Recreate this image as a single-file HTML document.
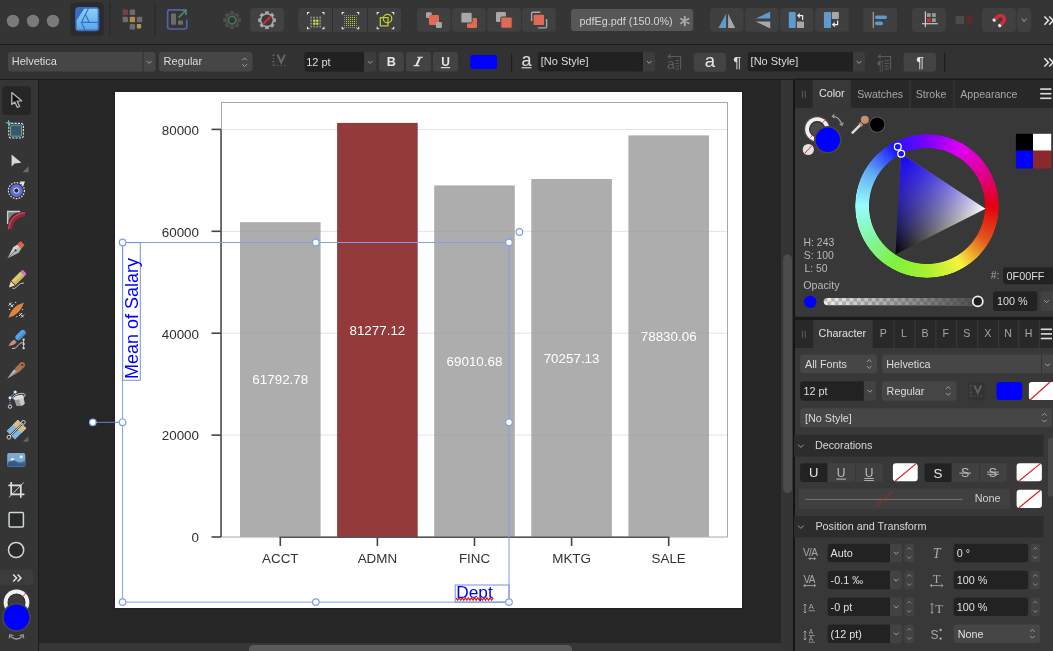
<!DOCTYPE html>
<html><head><meta charset="utf-8">
<style>
*{box-sizing:border-box;margin:0;padding:0}
html,body{width:1053px;height:651px;overflow:hidden;background:#282828;font-family:"Liberation Sans",sans-serif}
.a{position:absolute}
#root{position:relative;width:1053px;height:651px;overflow:hidden}
</style></head><body><div id="root">
<div class="a" style="left:0;top:0;width:1053px;height:44px;background:#353535"></div>
<div class="a" style="left:0;top:44px;width:1053px;height:1px;background:#1c1c1c"></div>
<div class="a" style="left:0;top:45px;width:1053px;height:34px;background:#323232"></div>
<div class="a" style="left:0;top:79px;width:1053px;height:1px;background:#1c1c1c"></div>
<div class="a" style="left:0;top:80px;width:38px;height:571px;background:#353535"></div>
<div class="a" style="left:38px;top:80px;width:1px;height:571px;background:#1c1c1c"></div>
<div class="a" style="left:39px;top:80px;width:755px;height:571px;background:#262626"></div>
<div class="a" style="left:39px;top:642.8px;width:742px;height:9px;background:#363636"></div>
<div class="a" style="left:249.4px;top:645.2px;width:322.4px;height:10px;border-radius:4.5px;background:#5a5a5a"></div>
<div class="a" style="left:115px;top:92px;width:627px;height:516px;background:#ffffff;box-shadow:0 0 1.5px #151515"></div>
<svg class="a" style="left:0;top:0" width="1053" height="651" font-family="Liberation Sans, sans-serif"><rect x="221.5" y="102.5" width="506" height="434.5" fill="none" stroke="#a8a8a8" stroke-width="1"/>
<line x1="222" y1="129.4" x2="727" y2="129.4" stroke="#ecebe3" stroke-width="1"/>
<line x1="222" y1="231.3" x2="727" y2="231.3" stroke="#ecebe3" stroke-width="1"/>
<line x1="222" y1="333.2" x2="727" y2="333.2" stroke="#ecebe3" stroke-width="1"/>
<line x1="222" y1="435.1" x2="727" y2="435.1" stroke="#ecebe3" stroke-width="1"/>
<rect x="240.0" y="222.2" width="80.6" height="314.8" fill="#adadad"/>
<text x="280.3" y="384.4" text-anchor="middle" fill="#ffffff" font-size="13.4">61792.78</text>
<line x1="280.3" y1="537.0" x2="280.3" y2="546" stroke="#444" stroke-width="1.6"/>
<text x="280.3" y="562.8" text-anchor="middle" fill="#333333" font-size="13.4">ACCT</text>
<rect x="337.1" y="122.9" width="80.6" height="414.1" fill="#953a3b"/>
<text x="377.4" y="334.7" text-anchor="middle" fill="#ffffff" font-size="13.4">81277.12</text>
<line x1="377.4" y1="537.0" x2="377.4" y2="546" stroke="#444" stroke-width="1.6"/>
<text x="377.4" y="562.8" text-anchor="middle" fill="#333333" font-size="13.4">ADMN</text>
<rect x="434.2" y="185.4" width="80.6" height="351.6" fill="#adadad"/>
<text x="474.5" y="366.0" text-anchor="middle" fill="#ffffff" font-size="13.4">69010.68</text>
<line x1="474.5" y1="537.0" x2="474.5" y2="546" stroke="#444" stroke-width="1.6"/>
<text x="474.5" y="562.8" text-anchor="middle" fill="#333333" font-size="13.4">FINC</text>
<rect x="531.3" y="179.0" width="80.6" height="358.0" fill="#adadad"/>
<text x="571.6" y="362.8" text-anchor="middle" fill="#ffffff" font-size="13.4">70257.13</text>
<line x1="571.6" y1="537.0" x2="571.6" y2="546" stroke="#444" stroke-width="1.6"/>
<text x="571.6" y="562.8" text-anchor="middle" fill="#333333" font-size="13.4">MKTG</text>
<rect x="628.4" y="135.4" width="80.6" height="401.6" fill="#adadad"/>
<text x="668.7" y="341.0" text-anchor="middle" fill="#ffffff" font-size="13.4">78830.06</text>
<line x1="668.7" y1="537.0" x2="668.7" y2="546" stroke="#444" stroke-width="1.6"/>
<text x="668.7" y="562.8" text-anchor="middle" fill="#333333" font-size="13.4">SALE</text>
<line x1="222" y1="435.1" x2="727" y2="435.1" stroke="#f8f7f3" stroke-width="1" style="mix-blend-mode:multiply"/>
<line x1="222" y1="333.2" x2="727" y2="333.2" stroke="#f8f7f3" stroke-width="1" style="mix-blend-mode:multiply"/>
<line x1="222" y1="231.3" x2="727" y2="231.3" stroke="#f8f7f3" stroke-width="1" style="mix-blend-mode:multiply"/>
<line x1="222" y1="129.4" x2="727" y2="129.4" stroke="#f8f7f3" stroke-width="1" style="mix-blend-mode:multiply"/>
<line x1="221" y1="129.6" x2="221" y2="537.0" stroke="#555" stroke-width="1.6"/>
<line x1="279.5" y1="537.2" x2="669.5" y2="537.2" stroke="#555" stroke-width="1.6"/>
<line x1="211.5" y1="537.0" x2="221" y2="537.0" stroke="#444" stroke-width="1.6"/>
<text x="199" y="542.3" text-anchor="end" fill="#2e2e2e" font-size="13.4">0</text>
<line x1="211.5" y1="435.1" x2="221" y2="435.1" stroke="#444" stroke-width="1.6"/>
<text x="199" y="440.4" text-anchor="end" fill="#2e2e2e" font-size="13.4">20000</text>
<line x1="211.5" y1="333.2" x2="221" y2="333.2" stroke="#444" stroke-width="1.6"/>
<text x="199" y="338.5" text-anchor="end" fill="#2e2e2e" font-size="13.4">40000</text>
<line x1="211.5" y1="231.3" x2="221" y2="231.3" stroke="#444" stroke-width="1.6"/>
<text x="199" y="236.6" text-anchor="end" fill="#2e2e2e" font-size="13.4">60000</text>
<line x1="211.5" y1="129.4" x2="221" y2="129.4" stroke="#444" stroke-width="1.6"/>
<text x="199" y="134.7" text-anchor="end" fill="#2e2e2e" font-size="13.4">80000</text></svg>
<svg class="a" style="left:0;top:0" width="1053" height="651" font-family="Liberation Sans, sans-serif"><rect x="122.6" y="242.5" width="386.4" height="359.6" fill="none" stroke="#7ea2e6" stroke-width="1"/>
<rect x="122.6" y="242.6" width="17.7" height="137.7" fill="none" stroke="#6f93e6" stroke-width="1"/>
<text transform="translate(138.2,379) rotate(-90)" fill="#0000ff" font-size="18">Mean of Salary</text>
<rect x="455.2" y="585" width="53.8" height="17.1" fill="none" stroke="#6f93e6" stroke-width="1"/>
<text x="456.2" y="597.5" fill="#0000ff" font-size="17.3">Dept</text>
<polyline points="456.0,597.9 457.6,600.1 459.1,597.9 460.7,600.1 462.2,597.9 463.8,600.1 465.3,597.9 466.9,600.1 468.4,597.9 470.0,600.1 471.5,597.9 473.1,600.1 474.6,597.9 476.2,600.1 477.7,597.9 479.3,600.1 480.8,597.9 482.4,600.1 483.9,597.9 485.5,600.1 487.0,597.9 488.6,600.1 490.1,597.9 491.7,600.1 493.2,597.9" fill="none" stroke="#e01a1a" stroke-width="1.2"/>
<line x1="92.8" y1="422.30" x2="122.6" y2="422.30" stroke="#5f86d0" stroke-width="1"/>
<circle cx="92.8" cy="422.30" r="3.3" fill="#ffffff" stroke="#7ea2e6" stroke-width="1.2"/>
<circle cx="122.60" cy="242.50" r="3.3" fill="#ffffff" stroke="#7ea2e6" stroke-width="1.2"/>
<circle cx="315.80" cy="242.50" r="3.3" fill="#ffffff" stroke="#7ea2e6" stroke-width="1.2"/>
<circle cx="509.00" cy="242.50" r="3.3" fill="#ffffff" stroke="#7ea2e6" stroke-width="1.2"/>
<circle cx="122.60" cy="422.30" r="3.3" fill="#ffffff" stroke="#7ea2e6" stroke-width="1.2"/>
<circle cx="509.00" cy="422.30" r="3.3" fill="#ffffff" stroke="#7ea2e6" stroke-width="1.2"/>
<circle cx="122.60" cy="602.10" r="3.3" fill="#ffffff" stroke="#7ea2e6" stroke-width="1.2"/>
<circle cx="315.80" cy="602.10" r="3.3" fill="#ffffff" stroke="#7ea2e6" stroke-width="1.2"/>
<circle cx="509.00" cy="602.10" r="3.3" fill="#ffffff" stroke="#7ea2e6" stroke-width="1.2"/>
<circle cx="519.40" cy="232.00" r="3.3" fill="#ffffff" stroke="#7ea2e6" stroke-width="1.2"/></svg>
<div class="a" style="left:794px;top:80px;width:259px;height:571px;background:#383838"></div>
<div class="a" style="left:792px;top:80px;width:2px;height:571px;background:#1c1c1c"></div>
<svg class="a" style="left:0;top:0" width="1053" height="44" font-family="Liberation Sans, sans-serif"><circle cx="13" cy="21" r="6.2" fill="#7a7a7a"/>
<circle cx="33" cy="21" r="6.2" fill="#7a7a7a"/>
<circle cx="53" cy="21" r="6.2" fill="#7a7a7a"/>
<rect x="70.5" y="2.5" width="33.3" height="33.2" rx="4" fill="#2b2b2b" />
<rect x="75.2" y="7" width="24.1" height="24.2" rx="3.5" fill="#3a6cc2" />
<defs><linearGradient id="ag" x1="0" y1="0" x2="0" y2="1"><stop offset="0" stop-color="#8ed0fa"/><stop offset="1" stop-color="#5aa6ea"/></linearGradient></defs>
<path d="M84.2,8.7 L96.8,8.7 Q97.6,8.7 97.6,9.5 L97.6,28.8 Q97.6,29.6 96.8,29.6 L77.5,29.6 Q76.7,29.6 76.7,28.8 L76.7,20.2 Z" fill="url(#ag)"/>
<path d="M88.4,8.6 L81.4,22.4 L84.9,29.7 M81.4,22.4 L97.7,22.4 M85.7,15 L89.3,22.4" fill="none" stroke="#3b6cc0" stroke-width="1.15"/>
<rect x="109.5" y="2.5" width="1" height="33" rx="0" fill="#262626" />
<rect x="154.5" y="2.5" width="1" height="33" rx="0" fill="#262626" />
<rect x="122.6" y="9.6" width="5.4" height="5.4" rx="1" fill="#7c3f48" />
<rect x="129.7" y="9.6" width="5.4" height="5.4" rx="1" fill="#6c6c6c" />
<rect x="122.6" y="16.8" width="5.4" height="5.4" rx="1" fill="#6c6c6c" />
<rect x="129.7" y="16.8" width="5.4" height="5.4" rx="1" fill="#b48a4e" />
<rect x="136.8" y="16.8" width="5.4" height="5.4" rx="1" fill="#6c6c6c" />
<rect x="129.7" y="24.0" width="5.4" height="5.4" rx="1" fill="#6c6c6c" />
<rect x="136.8" y="24.0" width="4.4" height="4.4" rx="1" fill="#aa9a4e" />
<path d="M181,9.8 L170,9.8 Q167.6,9.8 167.6,12.2 L167.6,26.6 Q167.6,29 170,29 L184.4,29 Q186.8,29 186.8,26.6 L186.8,19.5" fill="none" stroke="#5262aa" stroke-width="1.7"/>
<rect x="171" y="13.4" width="5" height="11.4" rx="0.8" fill="#6c6c6c" />
<rect x="178" y="20.4" width="5" height="4.4" rx="0.8" fill="#6c6c6c" />
<path d="M178.6,17.6 L185.6,10.6 M181.2,10.2 L186,10.2 L186,15" fill="none" stroke="#4a8670" stroke-width="1.7"/>
<path d="M238.83,18.27 L240.94,18.51 L240.94,21.89 L238.83,22.13 L238.57,22.88 L238.22,23.59 L239.55,25.26 L237.16,27.65 L235.49,26.32 L234.78,26.67 L234.03,26.93 L233.79,29.04 L230.41,29.04 L230.17,26.93 L229.42,26.67 L228.71,26.32 L227.04,27.65 L224.65,25.26 L225.98,23.59 L225.63,22.88 L225.37,22.13 L223.26,21.89 L223.26,18.51 L225.37,18.27 L225.63,17.52 L225.98,16.81 L224.65,15.14 L227.04,12.75 L228.71,14.08 L229.42,13.73 L230.17,13.47 L230.41,11.36 L233.79,11.36 L234.03,13.47 L234.78,13.73 L235.49,14.08 L237.16,12.75 L239.55,15.14 L238.22,16.81 L238.57,17.52Z" fill="#4e4e4e"/>
<circle cx="232.1" cy="20.2" r="5.6" fill="#333333"/>
<circle cx="232.1" cy="20.2" r="3.8" fill="none" stroke="#457250" stroke-width="1.9"/>
<rect x="250.1" y="8.1" width="33.9" height="23.7" rx="4" fill="#424242" />
<path d="M273.73,18.27 L275.84,18.51 L275.84,21.89 L273.73,22.13 L273.47,22.88 L273.12,23.59 L274.45,25.26 L272.06,27.65 L270.39,26.32 L269.68,26.67 L268.93,26.93 L268.69,29.04 L265.31,29.04 L265.07,26.93 L264.32,26.67 L263.61,26.32 L261.94,27.65 L259.55,25.26 L260.88,23.59 L260.53,22.88 L260.27,22.13 L258.16,21.89 L258.16,18.51 L260.27,18.27 L260.53,17.52 L260.88,16.81 L259.55,15.14 L261.94,12.75 L263.61,14.08 L264.32,13.73 L265.07,13.47 L265.31,11.36 L268.69,11.36 L268.93,13.47 L269.68,13.73 L270.39,14.08 L272.06,12.75 L274.45,15.14 L273.12,16.81 L273.47,17.52Z" fill="#a8a8a8"/>
<circle cx="267" cy="20.2" r="5.6" fill="#3a3a3a"/>
<line x1="264" y1="23.2" x2="270" y2="17.2" stroke="#d9283a" stroke-width="2.2" stroke-linecap="round"/>
<rect x="298.1" y="8.1" width="102.9" height="23.9" rx="4" fill="#404040" />
<rect x="332.2" y="8.1" width="0.8" height="23.9" rx="0" fill="#2c2c2c" />
<rect x="367.2" y="8.1" width="0.8" height="23.9" rx="0" fill="#2c2c2c" />
<path d="M307.5,14.5 L307.5,12.5 L309.5,12.5 M322.0,12.5 L324,12.5 L324,14.5 M307.5,26.8 L307.5,28.8 L309.5,28.8 M322.0,28.8 L324,28.8 L324,26.8" fill="none" stroke="#e8e8e8" stroke-width="1.1"/>
<rect x="310.2" y="16.6" width="1.9" height="1.9" rx="0" fill="#858585" />
<rect x="310.2" y="19.6" width="1.9" height="1.9" rx="0" fill="#858585" />
<rect x="310.2" y="22.6" width="1.9" height="1.9" rx="0" fill="#858585" />
<rect x="310.2" y="25.6" width="1.9" height="1.9" rx="0" fill="#858585" />
<rect x="313.2" y="16.6" width="1.9" height="1.9" rx="0" fill="#858585" />
<rect x="313.2" y="19.6" width="2.2" height="2.2" rx="0" fill="#d9ea2c" />
<rect x="313.2" y="22.6" width="2.2" height="2.2" rx="0" fill="#d9ea2c" />
<rect x="313.2" y="25.6" width="1.9" height="1.9" rx="0" fill="#858585" />
<rect x="316.2" y="16.6" width="1.9" height="1.9" rx="0" fill="#858585" />
<rect x="316.2" y="19.6" width="2.2" height="2.2" rx="0" fill="#d9ea2c" />
<rect x="316.2" y="22.6" width="2.2" height="2.2" rx="0" fill="#d9ea2c" />
<rect x="316.2" y="25.6" width="1.9" height="1.9" rx="0" fill="#858585" />
<rect x="319.2" y="16.6" width="1.9" height="1.9" rx="0" fill="#858585" />
<rect x="319.2" y="19.6" width="1.9" height="1.9" rx="0" fill="#858585" />
<rect x="319.2" y="22.6" width="1.9" height="1.9" rx="0" fill="#858585" />
<rect x="319.2" y="25.6" width="1.9" height="1.9" rx="0" fill="#858585" />
<path d="M342.2,14.5 L342.2,12.5 L344.2,12.5 M356.7,12.5 L358.7,12.5 L358.7,14.5 M342.2,26.8 L342.2,28.8 L344.2,28.8 M356.7,28.8 L358.7,28.8 L358.7,26.8" fill="none" stroke="#e8e8e8" stroke-width="1.1"/>
<rect x="344" y="15" width="1" height="1" rx="0" fill="#8a8a8a" />
<rect x="344" y="17" width="1" height="1" rx="0" fill="#8a8a8a" />
<rect x="344" y="19" width="1" height="1" rx="0" fill="#8a8a8a" />
<rect x="344" y="21" width="1" height="1" rx="0" fill="#8a8a8a" />
<rect x="344" y="23" width="1" height="1" rx="0" fill="#8a8a8a" />
<rect x="344" y="25" width="1" height="1" rx="0" fill="#8a8a8a" />
<rect x="344" y="27" width="1" height="1" rx="0" fill="#8a8a8a" />
<rect x="346" y="15" width="1" height="1" rx="0" fill="#8a8a8a" />
<rect x="346" y="17" width="1" height="1" rx="0" fill="#c4d62c" />
<rect x="346" y="19" width="1" height="1" rx="0" fill="#c4d62c" />
<rect x="346" y="21" width="1" height="1" rx="0" fill="#c4d62c" />
<rect x="346" y="23" width="1" height="1" rx="0" fill="#c4d62c" />
<rect x="346" y="25" width="1" height="1" rx="0" fill="#c4d62c" />
<rect x="346" y="27" width="1" height="1" rx="0" fill="#8a8a8a" />
<rect x="348" y="15" width="1" height="1" rx="0" fill="#8a8a8a" />
<rect x="348" y="17" width="1" height="1" rx="0" fill="#c4d62c" />
<rect x="348" y="19" width="1" height="1" rx="0" fill="#c4d62c" />
<rect x="348" y="21" width="1" height="1" rx="0" fill="#c4d62c" />
<rect x="348" y="23" width="1" height="1" rx="0" fill="#c4d62c" />
<rect x="348" y="25" width="1" height="1" rx="0" fill="#c4d62c" />
<rect x="348" y="27" width="1" height="1" rx="0" fill="#8a8a8a" />
<rect x="350" y="15" width="1" height="1" rx="0" fill="#8a8a8a" />
<rect x="350" y="17" width="1" height="1" rx="0" fill="#c4d62c" />
<rect x="350" y="19" width="1" height="1" rx="0" fill="#c4d62c" />
<rect x="350" y="21" width="1" height="1" rx="0" fill="#c4d62c" />
<rect x="350" y="23" width="1" height="1" rx="0" fill="#c4d62c" />
<rect x="350" y="25" width="1" height="1" rx="0" fill="#c4d62c" />
<rect x="350" y="27" width="1" height="1" rx="0" fill="#8a8a8a" />
<rect x="352" y="15" width="1" height="1" rx="0" fill="#8a8a8a" />
<rect x="352" y="17" width="1" height="1" rx="0" fill="#c4d62c" />
<rect x="352" y="19" width="1" height="1" rx="0" fill="#c4d62c" />
<rect x="352" y="21" width="1" height="1" rx="0" fill="#c4d62c" />
<rect x="352" y="23" width="1" height="1" rx="0" fill="#c4d62c" />
<rect x="352" y="25" width="1" height="1" rx="0" fill="#c4d62c" />
<rect x="352" y="27" width="1" height="1" rx="0" fill="#8a8a8a" />
<rect x="354" y="15" width="1" height="1" rx="0" fill="#8a8a8a" />
<rect x="354" y="17" width="1" height="1" rx="0" fill="#c4d62c" />
<rect x="354" y="19" width="1" height="1" rx="0" fill="#c4d62c" />
<rect x="354" y="21" width="1" height="1" rx="0" fill="#c4d62c" />
<rect x="354" y="23" width="1" height="1" rx="0" fill="#c4d62c" />
<rect x="354" y="25" width="1" height="1" rx="0" fill="#c4d62c" />
<rect x="354" y="27" width="1" height="1" rx="0" fill="#8a8a8a" />
<rect x="356" y="15" width="1" height="1" rx="0" fill="#8a8a8a" />
<rect x="356" y="17" width="1" height="1" rx="0" fill="#8a8a8a" />
<rect x="356" y="19" width="1" height="1" rx="0" fill="#8a8a8a" />
<rect x="356" y="21" width="1" height="1" rx="0" fill="#8a8a8a" />
<rect x="356" y="23" width="1" height="1" rx="0" fill="#8a8a8a" />
<rect x="356" y="25" width="1" height="1" rx="0" fill="#8a8a8a" />
<rect x="356" y="27" width="1" height="1" rx="0" fill="#8a8a8a" />
<path d="M377.2,14.5 L377.2,12.5 L379.2,12.5 M391.7,12.5 L393.7,12.5 L393.7,14.5 M377.2,26.8 L377.2,28.8 L379.2,28.8 M391.7,28.8 L393.7,28.8 L393.7,26.8" fill="none" stroke="#e8e8e8" stroke-width="1.1"/>
<rect x="380.3" y="17.6" width="7.7" height="8.3" fill="none" stroke="#c4cf3a" stroke-width="1.2"/>
<circle cx="387.5" cy="18.6" r="4.3" fill="none" stroke="#c4cf3a" stroke-width="1.2"/>
<rect x="416.9" y="8.1" width="33.8" height="23.6" rx="4" fill="#404040" />
<rect x="452.0" y="8.1" width="33.8" height="23.6" rx="4" fill="#404040" />
<rect x="487.2" y="8.1" width="33.8" height="23.6" rx="4" fill="#404040" />
<rect x="522.0" y="8.1" width="33.8" height="23.6" rx="4" fill="#404040" />
<rect x="426" y="12.3" width="5.7" height="5.6" rx="1.2" fill="#a8a8a8" />
<rect x="428.9" y="15.1" width="10.1" height="9.9" rx="1.2" fill="#e06a55" />
<rect x="435.9" y="22.1" width="6" height="5.8" rx="1.2" fill="#a8a8a8" />
<rect x="467" y="18" width="10" height="9.9" rx="1.2" fill="#e06a55" />
<rect x="460.9" y="12.3" width="11.3" height="10.7" rx="1.5" fill="#a8a8a8" stroke="#404040" stroke-width="1"/>
<rect x="496" y="12" width="9.9" height="10" rx="1.2" fill="#a8a8a8" />
<rect x="500.8" y="17" width="11.4" height="11.2" rx="1.2" fill="#e06a55" stroke="#404040" stroke-width="1"/>
<path d="M531.6,21 L531.6,13.4 Q531.6,12.3 532.7,12.3 L540.4,12.3" fill="none" stroke="#a8a8a8" stroke-width="1.4"/>
<path d="M546.6,19 L546.6,26.8 Q546.6,27.9 545.5,27.9 L538,27.9" fill="none" stroke="#a8a8a8" stroke-width="1.4"/>
<rect x="533.6" y="14.8" width="10.5" height="10.3" rx="1.2" fill="#e06a55" />
<rect x="571" y="9.1" width="122.2" height="21.8" rx="3.5" fill="#575757" />
<text x="579.6" y="24.9" font-size="10.8" fill="#d4d4d4">pdfEg.pdf (150.0%)</text>
<path d="M684.8,16.6 L684.8,25.4 M681,18.8 L688.6,23.2 M681,23.2 L688.6,18.8" stroke="#a8a8a8" stroke-width="1.9" stroke-linecap="round"/>
<rect x="710.0" y="8.1" width="33.6" height="23.7" rx="4" fill="#404040" />
<rect x="745.2" y="8.1" width="33.6" height="23.7" rx="4" fill="#404040" />
<rect x="780.0" y="8.1" width="33.6" height="23.7" rx="4" fill="#404040" />
<rect x="815.1" y="8.1" width="33.6" height="23.7" rx="4" fill="#404040" />
<path d="M718.5,28.1 L726.1,13.8 L726.1,28.1Z" fill="#5b9bd0"/>
<path d="M728.1,13.8 L728.1,28.1 L735.2,28.1Z" fill="#a8a8a8"/>
<path d="M755.6,18.5 L770.2,11.8 L770.2,18.5Z" fill="#5b9bd0"/>
<path d="M755.6,21.4 L770.2,21.4 L770.2,28.5Z" fill="#a8a8a8"/>
<rect x="788.8" y="12.1" width="6.9" height="16" rx="0.8" fill="#5b9bd0" />
<rect x="796.9" y="21.4" width="7.1" height="6.7" rx="0.8" fill="#a8a8a8" />
<path d="M802.6,20 L802.6,15.6 L798,15.6 M799.8,13.6 L797.8,15.6 L799.8,17.6" fill="none" stroke="#eeeeee" stroke-width="1.2"/>
<rect x="823.9" y="12.1" width="7.1" height="16" rx="0.8" fill="#5b9bd0" />
<rect x="831.8" y="12.1" width="7.1" height="6.9" rx="0.8" fill="#a8a8a8" />
<path d="M837.6,20.4 L837.6,24.6 L833,24.6 M834.8,22.6 L832.8,24.6 L834.8,26.6" fill="none" stroke="#eeeeee" stroke-width="1.2"/>
<rect x="863.3" y="8.1" width="33.7" height="23.9" rx="4" fill="#404040" />
<rect x="872.7" y="12" width="1.2" height="15.9" rx="0" fill="#a0a0a0" />
<rect x="875" y="15.4" width="12" height="3.7" rx="1.8" fill="#5b9bd0" />
<rect x="875" y="21.5" width="8" height="3.7" rx="1.8" fill="#5b9bd0" />
<rect x="911.9" y="8.1" width="33.9" height="23.9" rx="4" fill="#404040" />
<rect x="924.8" y="11.4" width="1.2" height="15.8" rx="0" fill="#c8c8c8" />
<rect x="922" y="23.1" width="15.9" height="1.2" rx="0" fill="#c8c8c8" />
<rect x="926.9" y="13.2" width="3.8" height="3.7" rx="0" fill="#9a9a9a" />
<rect x="932" y="13.2" width="3.8" height="3.7" rx="0" fill="#9a9a9a" />
<rect x="926.9" y="18.3" width="3.8" height="3.7" rx="0" fill="#d92b36" />
<rect x="932" y="18.3" width="3.8" height="3.7" rx="0" fill="#9a9a9a" />
<rect x="955.7" y="16" width="8.4" height="8.2" rx="0" fill="#4a4a4a" />
<path d="M964.6,16 L972.6,16 L972.6,24.2 L964.6,24.2 L968.2,20.1Z" fill="#5a2a2e"/>
<rect x="981.9" y="8.1" width="33.9" height="23.9" rx="4" fill="#404040" />
<rect x="1017" y="8.1" width="14" height="23.9" rx="4" fill="#404040" />
<g transform="translate(1000.4,19.4) rotate(-135)"><path d="M-3.9,-3.6 L-3.9,0.2 A3.9,3.9 0 0 0 3.9,0.2 L3.9,-3.6" fill="none" stroke="#d9283a" stroke-width="3.4"/><rect x="-5.6" y="-6.4" width="3.4" height="2.9" rx="1.2" fill="#eeeeee"/><rect x="2.2" y="-6.4" width="3.4" height="2.9" rx="1.2" fill="#eeeeee"/></g>
<path d="M1021.8,18.4 L1024.1,21.8 L1026.4,18.4" fill="none" stroke="#9a9a9a" stroke-width="1"/>
<path d="M1044.4,16.5 L1048.4,20.6 L1044.4,24.7 M1049.2,16.5 L1053.2,20.6 L1049.2,24.7" fill="none" stroke="#e8e8e8" stroke-width="1.5"/></svg>
<svg class="a" style="left:0;top:45px" width="1053" height="35" viewBox="0 45 1053 35" font-family="Liberation Sans, sans-serif"><rect x="8" y="52" width="147.5" height="19.5" rx="3.2" fill="#464646" />
<rect x="142.6" y="52" width="0.9" height="19.5" rx="0" fill="#2e2e2e" />
<text x="11.7" y="65.4" font-size="11" fill="#dcdcdc" >Helvetica</text>
<path d="M146.89999999999998,61.0 L149.2,63.400000000000006 L151.5,61.0" fill="none" stroke="#a0a0a0" stroke-width="1"/>
<rect x="159" y="52" width="93.5" height="19.5" rx="3.2" fill="#464646" />
<text x="163.6" y="65.4" font-size="11" fill="#dcdcdc" >Regular</text>
<path d="M242.29999999999998,60.25 L244.6,57.95 L246.9,60.25" fill="none" stroke="#a0a0a0" stroke-width="1"/>
<path d="M242.29999999999998,64.25 L244.6,66.55000000000001 L246.9,64.25" fill="none" stroke="#a0a0a0" stroke-width="1"/>
<path d="M277.6,54.6 L281.2,62.6 L284.8,54.6" fill="none" stroke="#686868" stroke-width="2"/>
<path d="M273.4,54.4 L273.4,56 M273.4,57.6 L273.4,59.2 M273.4,60.8 L273.4,62.4 M272,55.2 L274.8,55.2 M272,61.6 L274.8,61.6 M273.4,63.6 L273.4,65.6 L275.6,65.6 M277.4,65.6 L278.8,65.6 M280.6,65.6 L282,65.6 M283.8,65.6 L285.6,65.6" fill="none" stroke="#606060" stroke-width="0.9"/>
<rect x="304.3" y="52" width="71.8" height="19.7" rx="3.2" fill="#3c3c3c" />
<rect x="304.3" y="52" width="59.7" height="19.7" rx="3.2" fill="#212121" />
<rect x="360" y="52" width="4" height="19.7" rx="0" fill="#212121" />
<text x="306.2" y="65.9" font-size="11" fill="#dcdcdc" >12 pt</text>
<path d="M367.8,61.0 L370.1,63.400000000000006 L372.40000000000003,61.0" fill="none" stroke="#a0a0a0" stroke-width="1"/>
<rect x="378.9" y="52" width="25" height="19.4" rx="3.2" fill="#434343" />
<rect x="405.9" y="52" width="25" height="19.4" rx="3.2" fill="#434343" />
<rect x="433.0" y="52" width="25" height="19.4" rx="3.2" fill="#434343" />
<text x="391.3" y="66" font-size="12.6" font-weight="bold" fill="#e6e6e6" text-anchor="middle">B</text>
<path d="M420,57.4 L416.4,65.4" stroke="#e6e6e6" stroke-width="2"/>
<path d="M417.2,57.2 L423,57.2 M413.6,65.6 L419.4,65.6" stroke="#e6e6e6" stroke-width="1.1"/>
<text x="445.5" y="65.6" font-size="12" font-weight="bold" fill="#e6e6e6" text-anchor="middle">U</text>
<rect x="440.8" y="67.1" width="9.4" height="1.1" rx="0" fill="#e6e6e6" />
<rect x="470.1" y="54.9" width="27" height="14.1" rx="2.2" fill="#0000ff" />
<rect x="511.1" y="53.2" width="1" height="18.5" rx="0" fill="#1b1b1b" />
<text x="526.5" y="65.6" font-size="18" fill="#e0e0e0" text-anchor="middle">a</text>
<rect x="521.6" y="67.2" width="9.8" height="1.1" rx="0" fill="#e0e0e0" />
<rect x="537.7" y="52" width="117.3" height="19.5" rx="3.2" fill="#3c3c3c" />
<rect x="537.7" y="52" width="105.2" height="19.5" rx="3.2" fill="#212121" />
<rect x="638" y="52" width="4.9" height="19.5" rx="0" fill="#212121" />
<text x="540.8" y="65.4" font-size="11" fill="#dcdcdc" >[No Style]</text>
<path d="M647.0,61.0 L649.3,63.400000000000006 L651.5999999999999,61.0" fill="none" stroke="#a0a0a0" stroke-width="1"/>
<path d="M668.2,56.5 L680.6,56.5 L680.6,69.6 M670.6,54.4 L668.2,56.5 L670.6,58.6" fill="none" stroke="#5c5c5c" stroke-width="1.1"/>
<text x="670.9" y="69.4" font-size="14" fill="#5c5c5c" text-anchor="middle">a</text>
<path d="M675.6,60.6 L679,60.6 M675.6,63.4 L679,63.4 M675.6,66.2 L679,66.2 M675.6,69 L679,69" stroke="#5c5c5c" stroke-width="1"/>
<rect x="693.6" y="52.8" width="32.4" height="19" rx="3.2" fill="#434343" />
<text x="709.8" y="66.9" font-size="18.6" fill="#e6e6e6" text-anchor="middle">a</text>
<text x="737.2" y="66.9" font-size="15" fill="#e0e0e0" text-anchor="middle">¶</text>
<rect x="747.5" y="52" width="117.4" height="19.5" rx="3.2" fill="#3c3c3c" />
<rect x="747.5" y="52" width="105.5" height="19.5" rx="3.2" fill="#212121" />
<rect x="848" y="52" width="5" height="19.5" rx="0" fill="#212121" />
<text x="750.6" y="65.4" font-size="11" fill="#dcdcdc" >[No Style]</text>
<path d="M856.7,61.0 L859,63.400000000000006 L861.3,61.0" fill="none" stroke="#a0a0a0" stroke-width="1"/>
<path d="M878.4,56.5 L890.6,56.5 L890.6,69.6 M880.8,54.4 L878.4,56.5 L880.8,58.6" fill="none" stroke="#5c5c5c" stroke-width="1.1"/>
<text x="880.4" y="69.6" font-size="13" fill="#5c5c5c" text-anchor="middle">¶</text>
<path d="M884.6,60.6 L889,60.6 M884.6,63.4 L889,63.4 M884.6,66.2 L889,66.2 M884.6,69 L889,69" stroke="#5c5c5c" stroke-width="1"/>
<rect x="903.6" y="52.8" width="32.4" height="19" rx="3.2" fill="#434343" />
<text x="920.1" y="67.2" font-size="14.5" fill="#e6e6e6" text-anchor="middle">¶</text>
<rect x="944.1" y="53.1" width="1" height="18.9" rx="0" fill="#1b1b1b" />
<path d="M1044.4,58.3 L1048.4,62.4 L1044.4,66.5 M1049.2,58.3 L1053.2,62.4 L1049.2,66.5" fill="none" stroke="#e8e8e8" stroke-width="1.5"/></svg>
<svg class="a" style="left:0;top:80px" width="38" height="571" viewBox="0 80 38 571"><rect x="2.2" y="86.2" width="28.7" height="28.7" rx="3.5" fill="#262626" />
<path d="M11.8,92.6 L11.8,104.6 L14.8,102 L17.4,107.4 L19.6,106.4 L17.2,101.2 L21.6,100.8 Z" fill="#111111" stroke="#b4b4b4" stroke-width="1.35" stroke-linejoin="round"/>
<rect x="8.8" y="123.4" width="14.6" height="14.6" rx="2.4" fill="none" stroke="#e4e4e4" stroke-width="1.1" stroke-dasharray="2.2 1.1"/>
<rect x="10.6" y="125.2" width="11" height="11" rx="1" fill="#3b5668" stroke="#57b39c" stroke-width="1"/>
<path d="M8.6,120.2 L8.6,125.6 M5.9,122.9 L11.3,122.9" stroke="#5ec3a5" stroke-width="1.2"/>
<path d="M11.6,154.6 L11.6,166.6 L14.6,163.4 L21.4,162.8 Z" fill="#d8d8d8"/>
<path d="M28.6,166.2 L28.6,172.2 L22.6,172.2 Z" fill="#6a6a6a"/>
<circle cx="16.4" cy="190.6" r="8" fill="none" stroke="#e8e8e8" stroke-width="1.2" stroke-dasharray="1.6 1.3"/>
<circle cx="16.4" cy="190.6" r="6.3" fill="#5b6ee0"/>
<circle cx="16.4" cy="190.6" r="2.6" fill="#2a2a2a" stroke="#e8e8e8" stroke-width="1"/>
<path d="M19.6,181.6 L25,181.6 L23,186.6 Z" fill="#e8e8e8"/>
<path d="M7.6,211.6 L20.2,211.6 A14,14 0 0 0 7.6,223.8 Z" fill="#7c7c7c"/>
<path d="M7.6,224 L7.6,211.5 L20.2,211.5" fill="none" stroke="#cfcfcf" stroke-width="1.3"/>
<path d="M10,229.2 A15,15 0 0 1 25,214.2" fill="none" stroke="#a82a3c" stroke-width="4.2"/>
<path d="M8.6,229 A16.4,16.4 0 0 1 25,212.6" fill="none" stroke="#d84a60" stroke-width="0.9"/>
<path d="M10.8,229 A14.2,14.2 0 0 1 25,214.8" fill="none" stroke="#6a1a26" stroke-width="0.5"/>
<g transform="translate(14.6,251.2) rotate(45)"><path d="M-2.6,-6.8 L2.6,-6.8 L3.8,-2 L0,10 L-3.8,-2 Z" fill="#d2d2d2"/><path d="M0,-6.8 L2.6,-6.8 L3.8,-2 L0,10 Z" fill="#b4b4b4"/><path d="M0,-1 L0,9.6" stroke="#3a3a3a" stroke-width="0.7"/><circle cx="0" cy="-1.4" r="1" fill="#2a2a2a"/><rect x="-2.9" y="-11.4" width="5.8" height="4.8" rx="0.6" fill="#e0604c"/></g>
<g transform="translate(16.7,279.6) rotate(45)"><rect x="-3" y="-8.4" width="6" height="13.4" fill="#dccb72"/><rect x="0.6" y="-8.4" width="2.4" height="13.4" fill="#c8b55e"/><rect x="-3" y="-11.2" width="6" height="2.8" rx="1.2" fill="#d070d8"/><rect x="-3" y="4.6" width="6" height="0.8" fill="#2a2a2a"/><path d="M-3,5.4 L3,5.4 L0,11 Z" fill="#ece0a8"/></g>
<path d="M12.2,288.2 Q14.6,289.6 17.4,286.2 Q20.4,282.4 24,283" fill="none" stroke="#cfcfcf" stroke-width="0.9"/>
<path d="M8.4,317.6 Q11.6,306 23.9,302.4 Q20.6,314.4 8.4,317.6 Z" fill="#e0843c"/>
<path d="M9.2,303 L13,306.8 M8.6,305.6 L11.6,302.6 M10.6,307.2 L13.6,304.2" fill="none" stroke="#e0e0e0" stroke-width="1"/>
<path d="M19.6,313.4 L23.4,317.2 M19,316 L22,313 M21,317.6 L24,314.6" fill="none" stroke="#e0e0e0" stroke-width="1"/>
<circle cx="9.6" cy="309.4" r="0.7" fill="#d0d0d0"/><circle cx="16.8" cy="316.6" r="0.7" fill="#d0d0d0"/><circle cx="22.6" cy="309.6" r="0.7" fill="#d0d0d0"/><circle cx="15.6" cy="302.4" r="0.7" fill="#d0d0d0"/>
<g transform="translate(20.2,335.2) rotate(45)"><rect x="-2.8" y="-6.4" width="5.6" height="12" rx="2.8" fill="#5aa2e6"/><rect x="0.6" y="-6" width="2.2" height="11" rx="1.1" fill="#4a8ad0"/></g>
<path d="M8.4,345.8 Q10.6,341.4 14.2,339.6 L16.6,342 Q14.8,345.6 8.4,345.8 Z" fill="#c09070"/>
<path d="M12,348.6 Q15.6,349 18,345.6 Q20,342.6 22.6,342.4" fill="none" stroke="#d8d8d8" stroke-width="0.9"/>
<path d="M23.6,339 L23.6,348.8" stroke="#d8d8d8" stroke-width="0.9"/>
<rect x="22.6" y="338.6" width="2" height="2" fill="#d8d8d8"/>
<rect x="22.6" y="343" width="2" height="2" fill="#d8d8d8"/>
<rect x="22.6" y="347.2" width="2" height="2" fill="#d8d8d8"/>
<g transform="translate(20,367.2) rotate(45)"><rect x="-2.8" y="-5.8" width="5.6" height="11.6" rx="2.8" fill="#b0714a"/><circle cx="0" cy="-3.2" r="1.1" fill="#333"/></g>
<path d="M7.3,378.6 L14.2,369.2 L17.6,372.6 Z" fill="#c4c4c4"/>
<path d="M7.3,378.6 L17.6,372.6 L15.9,370.9 Z" fill="#8a8a8a"/>
<g transform="translate(19.4,400.4) rotate(-15)"><path d="M-5,-3.6 L5,-3.6 L4.2,4.6 Q0,6.6 -4.2,4.6 Z" fill="#9a9a9a"/><path d="M0,-3.6 L5,-3.6 L4.2,4.6 Q2,5.8 0,5.8 Z" fill="#c8c8c8"/><ellipse cx="0" cy="-3.6" rx="5" ry="1.8" fill="#dcdcdc"/><ellipse cx="0.6" cy="-4" rx="6.4" ry="2.6" fill="none" stroke="#e0e0e0" stroke-width="0.8"/></g>
<path d="M10,406 L10,398 L15,392.2" fill="none" stroke="#4a90e0" stroke-width="1.3" stroke-dasharray="1.6 0.9"/>
<circle cx="10" cy="406.6" r="1.7" fill="#333" stroke="#e8e8e8" stroke-width="0.9"/>
<circle cx="10" cy="397.8" r="1.5" fill="#e8e8e8"/>
<circle cx="15.2" cy="392" r="1.6" fill="#e8e8e8"/>
<g transform="translate(16.4,429.6) rotate(45)"><rect x="-6" y="-8" width="5" height="16" fill="#7fb6e0"/><rect x="-6" y="-8" width="5" height="7" fill="#d6bf86"/><rect x="1" y="-8" width="5" height="16" fill="#7fb6e0"/><rect x="1" y="-8" width="5" height="7" fill="#d6bf86"/></g>
<path d="M9.6,436.6 L22.8,423" stroke="#e8e8e8" stroke-width="0.9"/>
<circle cx="8.9" cy="437.2" r="1.9" fill="#333" stroke="#e8e8e8" stroke-width="0.9"/>
<circle cx="23.4" cy="422.4" r="1.9" fill="#333" stroke="#e8e8e8" stroke-width="0.9"/>
<path d="M28.4,436.2 L28.4,441.8 L22.8,441.8 Z" fill="#666"/>
<rect x="7.2" y="453" width="18.1" height="14" rx="1.8" fill="#7ea8ce" />
<path d="M7.6,462.6 Q12,457.6 16,461 Q20,464 24.9,460.4 L24.9,466.2 Q24.9,466.6 24.4,466.6 L8,466.6 Q7.6,466.6 7.6,466.2 Z" fill="#3d6a96"/>
<path d="M7.6,464 Q12,460.4 16.6,463 Q20.6,465.4 24.9,463.2 L24.9,466.6 L7.6,466.6 Z" fill="#2f5a86"/>
<circle cx="21.2" cy="456.8" r="1.6" fill="#f0f0f0"/>
<path d="M9.6,460.8 L12.4,457.4 L15,460" fill="#f0f0f0"/>
<path d="M11.2,482 L11.2,494.4 L24.4,494.4 M8.4,485.4 L20.8,485.4 L20.8,497.8" fill="none" stroke="#e0e0e0" stroke-width="1.7"/>
<path d="M9,497.4 L23.8,482.4" stroke="#e0e0e0" stroke-width="0.9"/>
<rect x="9.1" y="512.6" width="14.3" height="14.3" rx="1" fill="#262a2b" stroke="#d4d4d4" stroke-width="1.5"/>
<circle cx="16.1" cy="550" r="7.6" fill="#262a2b" stroke="#d4d4d4" stroke-width="1.5"/>
<rect x="0" y="569.5" width="33.6" height="15.4" rx="3" fill="#3c3c3c" />
<path d="M13.2,574.4 L16.6,577.9 L13.2,581.4 M17.6,574.4 L21,577.9 L17.6,581.4" fill="none" stroke="#e8e8e8" stroke-width="1.4"/>
<circle cx="16.5" cy="602.4" r="13.4" fill="#444" />
<circle cx="16.5" cy="602.4" r="12.8" fill="#f2f2f2"/>
<circle cx="16.5" cy="602.4" r="8.4" fill="#3c3c3c" stroke="#2a2a2a" stroke-width="1.2"/>
<path d="M22.2,597.2 L26.4,592.6" stroke="#e03030" stroke-width="0.9"/>
<circle cx="16.5" cy="617.4" r="14.4" fill="#46463e"/>
<circle cx="16.5" cy="617.4" r="12.8" fill="#0000ff"/>
<path d="M10.4,636.2 Q16.5,641.8 22.6,636.2" fill="none" stroke="#9a9a9a" stroke-width="1.2"/>
<path d="M9.2,638.4 L9.8,634.6 L13.4,635.6 M23.8,638.4 L23.2,634.6 L19.6,635.6" fill="none" stroke="#9a9a9a" stroke-width="1.1"/></svg>
<div class="a" style="left:855.3px;top:133.5px;width:144.2px;height:144.2px;border-radius:50%;background:conic-gradient(from 90deg, #e4000e 0deg, #e2561c 30deg, #f6f23e 60deg, #a8f030 90deg, #7ef23e 120deg, #84f6a0 150deg, #96fefe 180deg, #64aef2 210deg, #1a1aff 240deg, #7a00ff 270deg, #e000f2 300deg, #e00090 330deg, #e4000e 360deg);-webkit-mask:radial-gradient(circle closest-side, transparent 57.6px, #000 58.4px, #000 71.4px, transparent 72.2px)"></div>
<svg class="a" style="left:780px;top:78px" width="273" height="573" viewBox="780 78 273 573" font-family="Liberation Sans, sans-serif"><rect x="781.00" y="80.00" width="12.00" height="571.00" rx="0" fill="#353535" />
<rect x="783.10" y="254.40" width="8.90" height="238.60" rx="4.4" fill="#4c4c4c" />
<rect x="793.00" y="80.00" width="2.00" height="571.00" rx="0" fill="#141414" />
<rect x="794.00" y="78.50" width="259.00" height="1.50" rx="0" fill="#1a1a1a" />
<rect x="795.00" y="80.00" width="258.00" height="27.80" rx="0" fill="#282828" />
<rect x="812.70" y="80.00" width="38.20" height="27.80" rx="0" fill="#383838" />
<path d="M802.4,90.6 L802.4,98 M805.2,90.6 L805.2,98" stroke="#5a5a5a" stroke-width="1"/>
<text x="818.9" y="97.4" font-size="10.8" fill="#e2e2e2" >Color</text>
<text x="857.2" y="97.5" font-size="10.6" fill="#a6a6a6" >Swatches</text>
<rect x="909.50" y="80.00" width="1.00" height="27.80" rx="0" fill="#3a3a3a" />
<text x="915.8" y="97.5" font-size="10.6" fill="#a6a6a6" >Stroke</text>
<rect x="953.40" y="80.00" width="1.00" height="27.80" rx="0" fill="#3a3a3a" />
<text x="960.3" y="97.5" font-size="10.6" fill="#a6a6a6" >Appearance</text>
<rect x="1040.20" y="88.30" width="11.20" height="1.60" rx="0" fill="#dddddd" />
<rect x="1040.20" y="92.90" width="11.20" height="1.60" rx="0" fill="#dddddd" />
<rect x="1040.20" y="97.50" width="11.20" height="1.60" rx="0" fill="#dddddd" />
<circle cx="817.2" cy="129.2" r="13.2" fill="#4e4e4e"/>
<circle cx="817.2" cy="129.2" r="12" fill="#f0f0f0"/>
<circle cx="817.2" cy="129.2" r="7.6" fill="#4a4a4a" stroke="#2c2c2c" stroke-width="1.2"/>
<path d="M810.4,137.6 L813,134.8 M822.4,123 L825.2,120" stroke="#e83030" stroke-width="0.9"/>
<circle cx="827.8" cy="139.8" r="13.9" fill="#46463e"/>
<circle cx="827.8" cy="139.8" r="12.2" fill="#0000ff"/>
<circle cx="808.3" cy="149.5" r="5.6" fill="#e2e2e2"/>
<path d="M804.6,153.4 L812,145.6" stroke="#e03030" stroke-width="1"/>
<path d="M832.6,116.2 Q838.6,116.4 842,124.6" fill="none" stroke="#9a9a9a" stroke-width="1.3"/>
<path d="M834.4,114.4 L832.4,116.2 L834.6,118 M839.6,124 L842,125.4 L843.4,122.6" fill="none" stroke="#9a9a9a" stroke-width="1.2"/>
<path d="M852.6,132.6 L860.6,124.6" stroke="#dadada" stroke-width="2.6" stroke-linecap="round"/>
<path d="M859.4,122.8 L862.4,125.8" stroke="#c49070" stroke-width="2.4"/>
<circle cx="864.8" cy="119.8" r="4" fill="#c49070"/>
<circle cx="877.2" cy="124.6" r="8.2" fill="#555555"/>
<circle cx="877.2" cy="124.6" r="7.2" fill="#000000"/>
<rect x="1015.90" y="133.80" width="17.10" height="16.90" rx="0" fill="#000000" />
<rect x="1033.00" y="133.80" width="18.20" height="16.90" rx="0" fill="#ffffff" />
<rect x="1015.90" y="150.70" width="17.10" height="17.80" rx="0" fill="#0000ff" />
<rect x="1033.00" y="150.70" width="18.20" height="17.80" rx="0" fill="#8a282c" />
<defs><linearGradient id="bw" gradientUnits="userSpaceOnUse" x1="895.5" y1="254.3" x2="985.5" y2="208.8"><stop offset="0" stop-color="#000"/><stop offset="1" stop-color="#fff"/></linearGradient><linearGradient id="hu" gradientUnits="userSpaceOnUse" x1="901.2" y1="153.7" x2="940.5" y2="231.6"><stop offset="0" stop-color="#1200ff" stop-opacity="1"/><stop offset="1" stop-color="#1200ff" stop-opacity="0"/></linearGradient></defs>
<path d="M901.2,153.7 L985.5,208.8 L895.5,254.3Z" fill="url(#bw)"/>
<path d="M901.2,153.7 L985.5,208.8 L895.5,254.3Z" fill="url(#hu)"/>
<circle cx="897.8" cy="146.8" r="3.4" fill="#1a10ff" stroke="#ffffff" stroke-width="1.3"/>
<circle cx="901.2" cy="153.7" r="3.4" fill="#1a10ff" stroke="#ffffff" stroke-width="1.3"/>
<text x="803.6" y="246.2" font-size="10.4" fill="#b8b8b8" >H: 243</text>
<text x="803.8" y="259.1" font-size="10.4" fill="#b8b8b8" >S: 100</text>
<text x="804.4" y="272" font-size="10.4" fill="#b8b8b8" >L: 50</text>
<text x="803.3" y="288.5" font-size="10.7" fill="#b8b8b8" >Opacity</text>
<circle cx="810.2" cy="301.9" r="6.2" fill="#0000ff"/>
<defs><pattern id="chk" patternUnits="userSpaceOnUse" x="823.7" y="297.8" width="7.4" height="7.4"><rect width="7.4" height="7.4" fill="#f2f2f2"/><rect width="3.7" height="3.7" fill="#bdbdbd"/><rect x="3.7" y="3.7" width="3.7" height="3.7" fill="#bdbdbd"/></pattern><linearGradient id="fade" x1="0" y1="0" x2="1" y2="0"><stop offset="0" stop-color="#383838" stop-opacity="0"/><stop offset="1" stop-color="#383838" stop-opacity="0.92"/></linearGradient></defs>
<rect x="823.70" y="297.90" width="158.00" height="7.40" rx="3.7" fill="url(#chk)" />
<rect x="823.70" y="297.90" width="158.00" height="7.40" rx="3.7" fill="url(#fade)" />
<circle cx="977.8" cy="301.4" r="5" fill="#1e1e1e" stroke="#f0f0f0" stroke-width="1.8"/>
<text x="990.7" y="279.4" font-size="10.6" fill="#a0a0a0" >#:</text>
<rect x="1003.00" y="267.30" width="55.00" height="16.90" rx="3" fill="#222222" />
<text x="1006.6" y="279.8" font-size="10.8" fill="#dedede" >0F00FF</text>
<rect x="993.10" y="291.30" width="44.20" height="19.60" rx="3" fill="#222222" />
<text x="997" y="305.2" font-size="10.8" fill="#dedede" >100 %</text>
<rect x="1040.40" y="291.30" width="14.00" height="19.60" rx="3" fill="#424242" />
<path d="M1044.30,300.20 L1046.60,302.60 L1048.90,300.20" fill="none" stroke="#a0a0a0" stroke-width="1"/>
<rect x="794.00" y="316.80" width="259.00" height="3.20" rx="0" fill="#1a1a1a" />
<rect x="795.00" y="320.00" width="258.00" height="28.00" rx="0" fill="#282828" />
<rect x="813.20" y="320.00" width="59.50" height="28.00" rx="0" fill="#383838" />
<path d="M802.4,330.6 L802.4,338 M805.2,330.6 L805.2,338" stroke="#5a5a5a" stroke-width="1"/>
<text x="818.6" y="337" font-size="10.8" fill="#e2e2e2" >Character</text>
<text x="883.2" y="337" font-size="10.6" fill="#a6a6a6" text-anchor="middle">P</text>
<text x="904.0" y="337" font-size="10.6" fill="#a6a6a6" text-anchor="middle">L</text>
<text x="925.0" y="337" font-size="10.6" fill="#a6a6a6" text-anchor="middle">B</text>
<text x="945.8" y="337" font-size="10.6" fill="#a6a6a6" text-anchor="middle">F</text>
<text x="966.8" y="337" font-size="10.6" fill="#a6a6a6" text-anchor="middle">S</text>
<text x="987.7" y="337" font-size="10.6" fill="#a6a6a6" text-anchor="middle">X</text>
<text x="1008.2" y="337" font-size="10.6" fill="#a6a6a6" text-anchor="middle">N</text>
<text x="1028.5" y="337" font-size="10.6" fill="#a6a6a6" text-anchor="middle">H</text>
<rect x="893.60" y="320.00" width="1.00" height="28.00" rx="0" fill="#3a3a3a" />
<rect x="914.50" y="320.00" width="1.00" height="28.00" rx="0" fill="#3a3a3a" />
<rect x="935.40" y="320.00" width="1.00" height="28.00" rx="0" fill="#3a3a3a" />
<rect x="956.30" y="320.00" width="1.00" height="28.00" rx="0" fill="#3a3a3a" />
<rect x="977.20" y="320.00" width="1.00" height="28.00" rx="0" fill="#3a3a3a" />
<rect x="998.10" y="320.00" width="1.00" height="28.00" rx="0" fill="#3a3a3a" />
<rect x="1018.30" y="320.00" width="1.00" height="28.00" rx="0" fill="#3a3a3a" />
<rect x="1038.70" y="320.00" width="1.00" height="28.00" rx="0" fill="#3a3a3a" />
<rect x="1040.80" y="328.50" width="11.20" height="1.60" rx="0" fill="#dddddd" />
<rect x="1040.80" y="333.10" width="11.20" height="1.60" rx="0" fill="#dddddd" />
<rect x="1040.80" y="337.70" width="11.20" height="1.60" rx="0" fill="#dddddd" />
<rect x="800.10" y="354.60" width="77.00" height="18.70" rx="3.2" fill="#464646" />
<text x="805" y="367.7" font-size="10.8" fill="#dcdcdc" >All Fonts</text>
<path d="M866.90,361.95 L869.20,359.65 L871.50,361.95" fill="none" stroke="#a0a0a0" stroke-width="1"/>
<path d="M866.90,366.05 L869.20,368.35 L871.50,366.05" fill="none" stroke="#a0a0a0" stroke-width="1"/>
<rect x="882.00" y="354.60" width="180.00" height="18.70" rx="3.2" fill="#464646" />
<rect x="1041.00" y="354.60" width="1.00" height="18.70" rx="0" fill="#333" />
<text x="886.2" y="367.7" font-size="10.8" fill="#dcdcdc" >Helvetica</text>
<path d="M1045.30,363.60 L1047.60,366.00 L1049.90,363.60" fill="none" stroke="#a0a0a0" stroke-width="1"/>
<rect x="800.10" y="381.20" width="75.80" height="19.60" rx="3.2" fill="#424242" />
<rect x="800.10" y="381.20" width="63.50" height="19.60" rx="3.2" fill="#222222" />
<rect x="860.00" y="381.20" width="3.60" height="19.60" rx="0" fill="#222222" />
<text x="803.4" y="395.1" font-size="10.8" fill="#dedede" >12 pt</text>
<path d="M867.50,389.80 L869.80,392.20 L872.10,389.80" fill="none" stroke="#a0a0a0" stroke-width="1"/>
<rect x="882.00" y="381.20" width="74.30" height="19.60" rx="3.2" fill="#464646" />
<text x="886.6" y="395.1" font-size="10.8" fill="#dcdcdc" >Regular</text>
<path d="M945.90,388.95 L948.20,386.65 L950.50,388.95" fill="none" stroke="#a0a0a0" stroke-width="1"/>
<path d="M945.90,393.05 L948.20,395.35 L950.50,393.05" fill="none" stroke="#a0a0a0" stroke-width="1"/>
<rect x="968.60" y="382.00" width="16.70" height="18.40" rx="2" fill="#333333" />
<path d="M974.4,385.4 L977.8,393 L981.2,385.4" fill="none" stroke="#606060" stroke-width="1.9"/>
<path d="M970.8,385 L970.8,386.6 M970.8,388.2 L970.8,389.8 M970.8,391.4 L970.8,393 M969.6,385.8 L972,385.8 M969.6,392.2 L972,392.2 M970.8,394.4 L970.8,396.2 L972.8,396.2 M974.4,396.2 L975.8,396.2 M977.4,396.2 L978.8,396.2 M980.4,396.2 L982,396.2" fill="none" stroke="#5a5a5a" stroke-width="0.9"/>
<rect x="996.40" y="381.90" width="25.80" height="18.20" rx="3" fill="#0000ff" />
<rect x="1028.90" y="381.90" width="30.00" height="18.20" rx="3" fill="#ffffff" />
<path d="M1030,400 L1050,382" stroke="#e02020" stroke-width="1.2"/>
<rect x="800.10" y="408.20" width="252.00" height="19.00" rx="3.2" fill="#464646" />
<text x="805" y="421.6" font-size="10.8" fill="#dcdcdc" >[No Style]</text>
<path d="M1042.10,415.65 L1044.40,413.35 L1046.70,415.65" fill="none" stroke="#a0a0a0" stroke-width="1"/>
<path d="M1042.10,419.75 L1044.40,422.05 L1046.70,419.75" fill="none" stroke="#a0a0a0" stroke-width="1"/>
<rect x="794.00" y="434.90" width="249.60" height="21.70" rx="0" fill="#2c2c2c" />
<path d="M798.10,444.60 L800.90,447.40 L803.70,444.60" fill="none" stroke="#9a9a9a" stroke-width="1"/>
<text x="814.9" y="449.2" font-size="10.8" fill="#d8d8d8" >Decorations</text>
<rect x="1048.00" y="437.80" width="6.00" height="58.70" rx="3" fill="#4a4a4a" />
<rect x="800.10" y="463.20" width="82.90" height="18.90" rx="3" fill="#404040" />
<rect x="800.10" y="463.20" width="27.10" height="18.90" rx="3" fill="#222222" />
<rect x="824.00" y="463.20" width="3.20" height="18.90" rx="0" fill="#222222" />
<rect x="827.20" y="463.20" width="0.80" height="18.90" rx="0" fill="#353535" />
<rect x="855.00" y="463.20" width="0.80" height="18.90" rx="0" fill="#353535" />
<text x="813.6" y="477.4" font-size="13" fill="#e8e8e8" text-anchor="middle">U</text>
<text x="841.2" y="477.4" font-size="12" fill="#bdbdbd" text-anchor="middle">U</text>
<rect x="836.40" y="478.60" width="9.60" height="1.00" rx="0" fill="#bdbdbd" />
<text x="869" y="476.6" font-size="12" fill="#bdbdbd" text-anchor="middle">U</text>
<rect x="864.20" y="478.00" width="9.60" height="0.90" rx="0" fill="#bdbdbd" />
<rect x="864.20" y="480.00" width="9.60" height="0.90" rx="0" fill="#bdbdbd" />
<rect x="892.90" y="463.20" width="24.80" height="18.00" rx="3" fill="#ffffff" />
<path d="M895.3,481.0 L916.1,463.6" stroke="#e02020" stroke-width="1.2"/>
<rect x="924.40" y="463.20" width="82.60" height="18.90" rx="3" fill="#404040" />
<rect x="924.40" y="463.20" width="27.00" height="18.90" rx="3" fill="#222222" />
<rect x="948.00" y="463.20" width="3.40" height="18.90" rx="0" fill="#222222" />
<rect x="979.00" y="463.20" width="0.80" height="18.90" rx="0" fill="#353535" />
<text x="937.9" y="477.8" font-size="13.4" fill="#e8e8e8" text-anchor="middle">S</text>
<text x="965.2" y="477.4" font-size="12.4" fill="#bdbdbd" text-anchor="middle">S</text>
<rect x="959.40" y="472.60" width="11.60" height="1.00" rx="0" fill="#bdbdbd" />
<text x="993" y="477.4" font-size="12.4" fill="#bdbdbd" text-anchor="middle">S</text>
<rect x="987.20" y="471.60" width="11.60" height="0.90" rx="0" fill="#bdbdbd" />
<rect x="987.20" y="473.80" width="11.60" height="0.90" rx="0" fill="#bdbdbd" />
<rect x="1016.60" y="463.20" width="25.30" height="18.00" rx="3" fill="#ffffff" />
<path d="M1019.0,481.0 L1040.3,463.6" stroke="#e02020" stroke-width="1.2"/>
<rect x="798.90" y="488.50" width="211.10" height="20.70" rx="3" fill="#404040" />
<rect x="805.40" y="498.90" width="157.00" height="1.00" rx="0" fill="#777777" />
<path d="M876.4,506.2 L891.9,491.5" stroke="#c02020" stroke-width="1"/>
<text x="974.8" y="501.9" font-size="10.8" fill="#d0d0d0" >None</text>
<rect x="1016.60" y="489.80" width="25.30" height="18.20" rx="3" fill="#ffffff" />
<path d="M1019.0,507.8 L1040.3,490.2" stroke="#e02020" stroke-width="1.2"/>
<rect x="794.00" y="516.10" width="249.60" height="21.40" rx="0" fill="#2c2c2c" />
<path d="M798.10,525.60 L800.90,528.40 L803.70,525.60" fill="none" stroke="#9a9a9a" stroke-width="1"/>
<text x="815.4" y="530.4" font-size="10.8" fill="#d8d8d8" >Position and Transform</text>
<rect x="827.50" y="543.70" width="74.50" height="18.60" rx="3" fill="#424242" />
<rect x="827.50" y="543.70" width="62.50" height="18.60" rx="3" fill="#222222" />
<rect x="886.00" y="543.70" width="4.00" height="18.60" rx="0" fill="#222222" />
<text x="830.6" y="557.1" font-size="10.8" fill="#e0e0e0" >Auto</text>
<path d="M893.90,551.80 L896.20,554.20 L898.50,551.80" fill="none" stroke="#a0a0a0" stroke-width="1"/>
<rect x="904.50" y="543.70" width="9.70" height="18.60" rx="2.5" fill="#424242" />
<path d="M907.40,549.50 L909.30,547.50 L911.20,549.50" fill="none" stroke="#8a8a8a" stroke-width="1"/>
<path d="M907.40,556.50 L909.30,558.50 L911.20,556.50" fill="none" stroke="#8a8a8a" stroke-width="1"/>
<rect x="953.70" y="543.70" width="74.30" height="18.60" rx="3" fill="#222222" />
<text x="956.8" y="557.1" font-size="10.8" fill="#e0e0e0" >0 °</text>
<rect x="1030.50" y="543.70" width="9.70" height="18.60" rx="2.5" fill="#424242" />
<path d="M1033.40,549.50 L1035.30,547.50 L1037.20,549.50" fill="none" stroke="#8a8a8a" stroke-width="1"/>
<path d="M1033.40,556.50 L1035.30,558.50 L1037.20,556.50" fill="none" stroke="#8a8a8a" stroke-width="1"/>
<rect x="827.50" y="570.70" width="74.50" height="18.60" rx="3" fill="#424242" />
<rect x="827.50" y="570.70" width="62.50" height="18.60" rx="3" fill="#222222" />
<rect x="886.00" y="570.70" width="4.00" height="18.60" rx="0" fill="#222222" />
<text x="830.6" y="584.1" font-size="10.8" fill="#e0e0e0" >-0.1 ‰</text>
<path d="M893.90,578.80 L896.20,581.20 L898.50,578.80" fill="none" stroke="#a0a0a0" stroke-width="1"/>
<rect x="904.50" y="570.70" width="9.70" height="18.60" rx="2.5" fill="#424242" />
<path d="M907.40,576.50 L909.30,574.50 L911.20,576.50" fill="none" stroke="#8a8a8a" stroke-width="1"/>
<path d="M907.40,583.50 L909.30,585.50 L911.20,583.50" fill="none" stroke="#8a8a8a" stroke-width="1"/>
<rect x="953.70" y="570.70" width="74.30" height="18.60" rx="3" fill="#222222" />
<text x="956.8" y="584.1" font-size="10.8" fill="#e0e0e0" >100 %</text>
<rect x="1030.50" y="570.70" width="9.70" height="18.60" rx="2.5" fill="#424242" />
<path d="M1033.40,576.50 L1035.30,574.50 L1037.20,576.50" fill="none" stroke="#8a8a8a" stroke-width="1"/>
<path d="M1033.40,583.50 L1035.30,585.50 L1037.20,583.50" fill="none" stroke="#8a8a8a" stroke-width="1"/>
<rect x="827.50" y="597.50" width="74.50" height="18.60" rx="3" fill="#424242" />
<rect x="827.50" y="597.50" width="62.50" height="18.60" rx="3" fill="#222222" />
<rect x="886.00" y="597.50" width="4.00" height="18.60" rx="0" fill="#222222" />
<text x="830.6" y="610.9" font-size="10.8" fill="#e0e0e0" >-0 pt</text>
<path d="M893.90,605.60 L896.20,608.00 L898.50,605.60" fill="none" stroke="#a0a0a0" stroke-width="1"/>
<rect x="904.50" y="597.50" width="9.70" height="18.60" rx="2.5" fill="#424242" />
<path d="M907.40,603.30 L909.30,601.30 L911.20,603.30" fill="none" stroke="#8a8a8a" stroke-width="1"/>
<path d="M907.40,610.30 L909.30,612.30 L911.20,610.30" fill="none" stroke="#8a8a8a" stroke-width="1"/>
<rect x="953.70" y="597.50" width="74.30" height="18.60" rx="3" fill="#222222" />
<text x="956.8" y="610.9" font-size="10.8" fill="#e0e0e0" >100 %</text>
<rect x="1030.50" y="597.50" width="9.70" height="18.60" rx="2.5" fill="#424242" />
<path d="M1033.40,603.30 L1035.30,601.30 L1037.20,603.30" fill="none" stroke="#8a8a8a" stroke-width="1"/>
<path d="M1033.40,610.30 L1035.30,612.30 L1037.20,610.30" fill="none" stroke="#8a8a8a" stroke-width="1"/>
<rect x="827.50" y="624.50" width="74.50" height="18.60" rx="3" fill="#424242" />
<rect x="827.50" y="624.50" width="62.50" height="18.60" rx="3" fill="#222222" />
<rect x="886.00" y="624.50" width="4.00" height="18.60" rx="0" fill="#222222" />
<text x="830.6" y="637.9" font-size="10.8" fill="#e0e0e0" >(12 pt)</text>
<path d="M893.90,632.60 L896.20,635.00 L898.50,632.60" fill="none" stroke="#a0a0a0" stroke-width="1"/>
<rect x="904.50" y="624.50" width="9.70" height="18.60" rx="2.5" fill="#424242" />
<path d="M907.40,630.30 L909.30,628.30 L911.20,630.30" fill="none" stroke="#8a8a8a" stroke-width="1"/>
<path d="M907.40,637.30 L909.30,639.30 L911.20,637.30" fill="none" stroke="#8a8a8a" stroke-width="1"/>
<rect x="953.70" y="624.50" width="86.50" height="18.60" rx="3" fill="#464646" />
<text x="957.8" y="637.9" font-size="10.8" fill="#e0e0e0" >None</text>
<path d="M1030.10,631.75 L1032.40,629.45 L1034.70,631.75" fill="none" stroke="#a0a0a0" stroke-width="1"/>
<path d="M1030.10,635.85 L1032.40,638.15 L1034.70,635.85" fill="none" stroke="#a0a0a0" stroke-width="1"/>
<text x="803" y="556" font-size="10" fill="#a8a8a8" letter-spacing="-0.6">V/A</text>
<path d="M809,558.6 L815.6,558.6 M810.4,557.2 L809,558.6 L810.4,560 M814.2,557.2 L815.6,558.6 L814.2,560" fill="none" stroke="#a8a8a8" stroke-width="0.9"/>
<text x="803.6" y="583" font-size="10" fill="#a8a8a8" letter-spacing="-0.8">VA</text>
<path d="M803.8,585.6 L815.6,585.6 M805.4,584 L803.8,585.6 L805.4,587.2 M814,584 L815.6,585.6 L814,587.2" fill="none" stroke="#a8a8a8" stroke-width="0.9"/>
<path d="M805,604 L805,613 M803.6,605.4 L805,604 L806.4,605.4 M803.6,611.6 L805,613 L806.4,611.6" fill="none" stroke="#a8a8a8" stroke-width="0.9"/>
<text x="808.6" y="609.4" font-size="8" fill="#a8a8a8" >A</text>
<rect x="808.60" y="610.40" width="6.40" height="0.80" rx="0" fill="#a8a8a8" />
<path d="M805,631 L805,640 M803.6,632.4 L805,631 L806.4,632.4 M803.6,638.6 L805,640 L806.4,638.6" fill="none" stroke="#a8a8a8" stroke-width="0.9"/>
<text x="808.8" y="634.4" font-size="6.5" fill="#a8a8a8" >A</text>
<rect x="808.60" y="635.20" width="6.40" height="0.70" rx="0" fill="#a8a8a8" />
<text x="808.8" y="641" font-size="6.5" fill="#a8a8a8" >A</text>
<rect x="808.60" y="641.80" width="6.40" height="0.70" rx="0" fill="#a8a8a8" />
<text x="936.6" y="557.6" font-size="14" font-style="italic" font-family="Liberation Serif, serif" fill="#a8a8a8" text-anchor="middle">T</text>
<text x="936.6" y="582.6" font-size="12.5" font-family="Liberation Serif, serif" fill="#a8a8a8" text-anchor="middle">T</text>
<path d="M930.4,585.6 L943,585.6 M932,584 L930.4,585.6 L932,587.2 M941.4,584 L943,585.6 L941.4,587.2" fill="none" stroke="#a8a8a8" stroke-width="0.9"/>
<path d="M932,603.4 L932,613.4 M930.6,604.8 L932,603.4 L933.4,604.8 M930.6,612 L932,613.4 L933.4,612" fill="none" stroke="#a8a8a8" stroke-width="0.9"/>
<text x="939.2" y="612.8" font-size="13" font-family="Liberation Serif, serif" fill="#a8a8a8" text-anchor="middle">T</text>
<text x="930.6" y="639.4" font-size="12" fill="#a8a8a8" >S</text>
<circle cx="940.6" cy="630" r="1.2" fill="#a8a8a8"/><circle cx="940.6" cy="638.6" r="1.2" fill="#a8a8a8"/></svg>
</div></body></html>
